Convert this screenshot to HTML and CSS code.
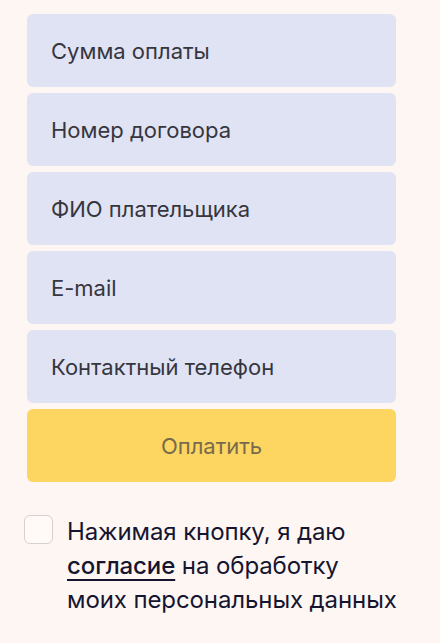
FILE: index.html
```html
<!DOCTYPE html>
<html>
<head>
	<meta charset="utf-8">
	<title>Оплата</title>
	<link rel="stylesheet" href="styles.css">
</head>
<body>

<form class="pay">
	<input class="field" type="text" placeholder="Сумма оплаты">
	<input class="field" type="text" placeholder="Номер договора">
	<input class="field" type="text" placeholder="ФИО плательщика">
	<input class="field" type="email" placeholder="E-mail">
	<input class="field" type="tel" placeholder="Контактный телефон">
	<button class="submit" type="submit" disabled>Оплатить</button>

	<label class="agree">
		<input type="checkbox">
		<span class="box"></span>
		<span class="agree-text">Нажимая кнопку, я даю <a href="#">согласие</a> на обработку моих персональных данных</span>
	</label>
</form>

</body>
</html>
```

FILE: styles.css
```css
* {
	box-sizing: border-box;
}
body {
	margin: 0;
	background: #fef6f3;
	font-family: Inter, "Noto Sans", sans-serif;
}
.pay {
	display: flex;
	flex-direction: column;
	gap: 6px;
	width: 369px;
	margin: 14px 0 0 27px;
}
.field {
	height: 73px;
	border: none;
	border-radius: 6px;
	background: #e0e3f4;
	padding: 0 24px;
	font: inherit;
	font-size: 22px;
	color: #333;
	outline: none;
}
.field::placeholder {
	color: #36363e;
	opacity: 1;
}
.submit {
	height: 73px;
	border: none;
	border-radius: 6px;
	background: #fdd561;
	font: inherit;
	font-size: 22px;
	color: #776a4c;
}
.agree {
	display: flex;
	align-items: flex-start;
	gap: 14px;
	margin: 27px -8px 0 -3px;
	cursor: pointer;
}
.agree input {
	display: none;
}
.box {
	flex: none;
	width: 29px;
	height: 29px;
	border: 1px solid #d9cfcf;
	border-radius: 6px;
	background: #fffaf8;
}
.agree-text {
	font-size: 24px;
	line-height: 34px;
	letter-spacing: -0.1px;
	color: #151530;
}
.agree-text a {
	color: #151530;
	font-weight: 500;
	text-decoration-thickness: 2px;
	text-underline-offset: 5px;
}
```
